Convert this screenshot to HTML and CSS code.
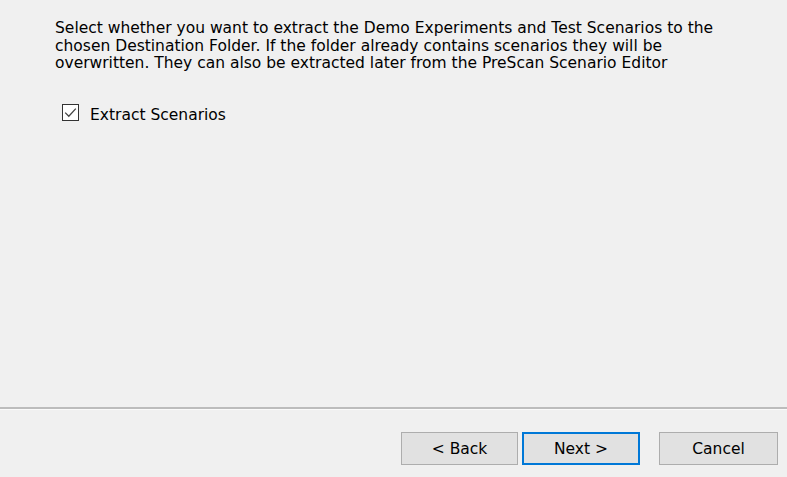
FILE: index.html
```html
<!DOCTYPE html>
<html lang="en">
<head>
<meta charset="utf-8">
<title>Extract Scenarios</title>
<link rel="stylesheet" href="styles.css">
</head>
<body>
<div class="wizard">
  <main class="content">
    <p class="desc">Select whether you want to extract the Demo Experiments and Test Scenarios to the<br>chosen Destination Folder. If the folder already contains scenarios they will be<br>overwritten. They can also be extracted later from the PreScan Scenario Editor</p>
    <label class="check">
      <span class="box">
        <svg width="15" height="15" viewBox="0 0 15 15"><path d="M2.2 7.6 L5.8 11.2 L12.8 3.6" fill="none" stroke="#444" stroke-width="1.3"/></svg>
      </span>
      <span class="check-label">Extract Scenarios</span>
    </label>
  </main>
  <div class="sep"></div>
  <footer class="footer">
    <button class="btn">&lt; Back</button>
    <button class="btn primary">Next &gt;</button>
    <button class="btn cancel">Cancel</button>
  </footer>
</div>
</body>
</html>
```
FILE: styles.css
```css
html, body {
  margin: 0;
  padding: 0;
  background: #f0f0f0;
}
.wizard {
  width: 787px;
  height: 477px;
  display: flex;
  flex-direction: column;
  font-family: "DejaVu Sans", Tahoma, sans-serif;
  font-size: 15.5px;
  color: #000;
}
.content {
  flex: 1;
  padding: 20px 0 0 55px;
}
.desc {
  margin: 0;
  line-height: 17.5px;
}
.check {
  display: flex;
  align-items: flex-start;
  gap: 11px;
  margin: 34px 0 0 7px;
  line-height: 17.5px;
}
.box {
  width: 15px;
  height: 15px;
  margin-top: -3px;
  border: 1px solid #333;
  background: #fff;
  display: flex;
  align-items: center;
  justify-content: center;
}
.sep {
  height: 2px;
  background: #bcbcbc;
  border-bottom: 1px solid #fafafa;
}
.footer {
  display: flex;
  padding: 22px 9px 12px 401px;
}
.btn {
  width: 117px;
  height: 33px;
  margin: 0;
  background: #e1e1e1;
  border: 1px solid #adadad;
  font-family: "DejaVu Sans", Tahoma, sans-serif;
  font-size: 15.5px;
  color: #000;
  padding: 0;
}
.primary {
  margin-left: 4px;
  width: 118px;
  border: 2px solid #0078d7;
}
.cancel {
  margin-left: 19px;
  width: 119px;
}
```
